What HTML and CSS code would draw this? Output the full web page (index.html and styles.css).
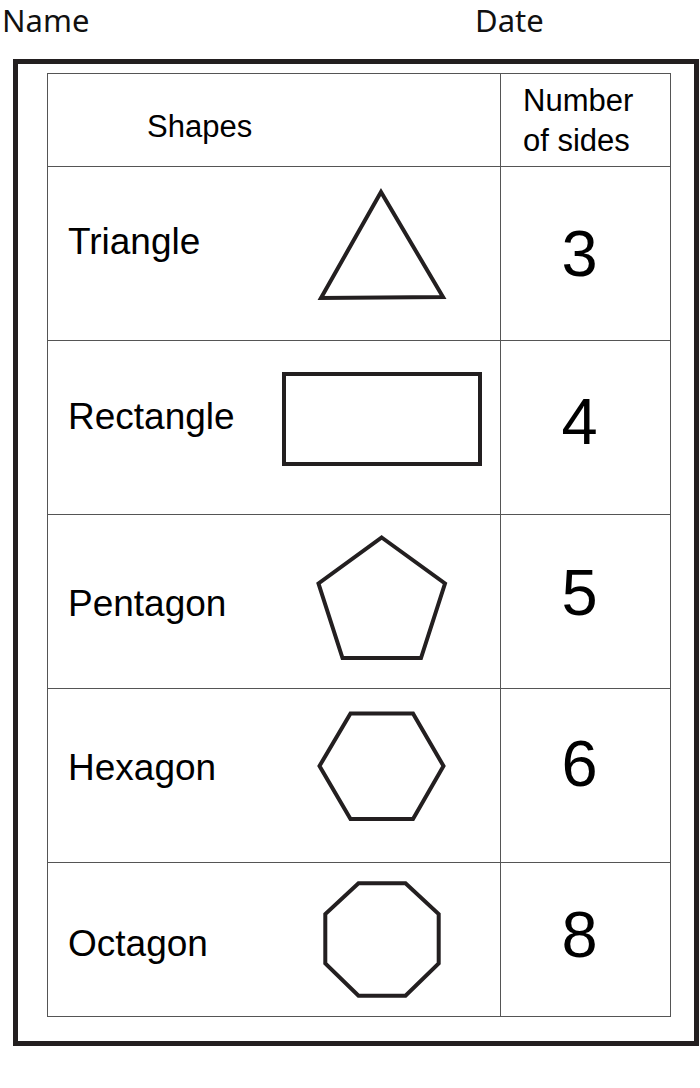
FILE: index.html
```html
<!DOCTYPE html>
<html lang="en">
<head>
<meta charset="utf-8">
<title>Shapes worksheet</title>
<link rel="stylesheet" href="styles.css">
</head>
<body>
<div class="page">
  <div class="topline">
    <span class="name">Name</span>
    <span class="date">Date</span>
  </div>
  <div class="frame">
    <div class="sheet">
      <div class="cell head-shapes">Shapes</div>
      <div class="cell head-sides">Number<br>of sides</div>

      <div class="cell shape-cell row-a">
        <div class="label">Triangle</div>
        <svg class="pic" viewBox="0 0 220 173" width="220" height="173">
          <polygon points="111,25 51,131 173,130"/>
        </svg>
      </div>
      <div class="cell count row-a">3</div>

      <div class="cell shape-cell row-b">
        <div class="label">Rectangle</div>
        <svg class="pic" viewBox="0 0 220 173" width="220" height="173">
          <rect x="14" y="33" width="196" height="90"/>
        </svg>
      </div>
      <div class="cell count row-b">4</div>

      <div class="cell shape-cell row-c">
        <div class="label">Pentagon</div>
        <svg class="pic" viewBox="0 0 220 173" width="220" height="173">
          <polygon points="111.7,22.5 175,68.5 151,143 72.5,143 48.5,68.5"/>
        </svg>
      </div>
      <div class="cell count row-c">5</div>

      <div class="cell shape-cell row-d">
        <div class="label">Hexagon</div>
        <svg class="pic" viewBox="0 0 220 173" width="220" height="173">
          <polygon points="80.5,24.5 143,24.5 173.5,77 143,130 80.5,130 49.5,77"/>
        </svg>
      </div>
      <div class="cell count row-d">6</div>

      <div class="cell shape-cell row-e last">
        <div class="label">Octagon</div>
        <svg class="pic" viewBox="0 0 220 153" width="220" height="153">
          <polygon points="88.5,20.3 135.5,20.3 168.7,51 168.7,100.5 135.5,132.7 88.5,132.7 55.3,100.5 55.3,51"/>
        </svg>
      </div>
      <div class="cell count row-e last">8</div>
    </div>
  </div>
</div>
</body>
</html>
```

FILE: styles.css
```css
html, body {
  margin: 0;
  padding: 0;
  background: #ffffff;
}

.page {
  width: 700px;
  height: 1088px;
  color: #000;
  font-family: "Liberation Sans", Arial, sans-serif;
}

.topline {
  display: flex;
  height: 59px;
  box-sizing: border-box;
  padding: 5px 0 0 2px;
  font-family: "Noto Sans", "Open Sans", sans-serif;
  font-size: 31px;
  line-height: 31px;
  color: #111;
}

.topline .name {
  width: 473px;
}

.frame {
  margin-left: 13px;
  width: 686px;
  box-sizing: border-box;
  border: 5px solid #231f20;
  padding: 9px 23px 24px 29px;
}

.sheet {
  display: grid;
  grid-template-columns: 453px 170px;
  grid-template-rows: 93px 174px 174px 174px 174px 154px;
  border-top: 1px solid #555;
  border-left: 1px solid #555;
}

.cell {
  border-right: 1px solid #555;
  border-bottom: 1px solid #555;
  box-sizing: border-box;
}

.head-shapes {
  font-size: 31px;
  line-height: 31px;
  padding: 37px 0 0 99px;
}

.head-sides {
  font-size: 31px;
  line-height: 40px;
  padding: 7px 0 0 22px;
}

.shape-cell {
  display: grid;
  grid-template-columns: 222px 220px;
  align-items: start;
}

.label {
  font-size: 37px;
  line-height: 37px;
  padding-left: 20px;
}

.pic {
  display: block;
}

.pic polygon,
.pic rect {
  fill: none;
  stroke: #231f20;
  stroke-width: 4;
  stroke-linejoin: miter;
}

.count {
  font-size: 65px;
  line-height: 65px;
  text-align: center;
  padding-right: 12px;
}

.row-a .label { padding-top: 56px; }
.row-b .label { padding-top: 57px; }
.row-c .label { padding-top: 70px; }
.row-d .label { padding-top: 60px; }
.row-e .label { padding-top: 62px; }

.count.row-a { padding-top: 54px; }
.count.row-b { padding-top: 48px; }
.count.row-c { padding-top: 45px; }
.count.row-d { padding-top: 42px; }
.count.row-e { padding-top: 39px; }
```
